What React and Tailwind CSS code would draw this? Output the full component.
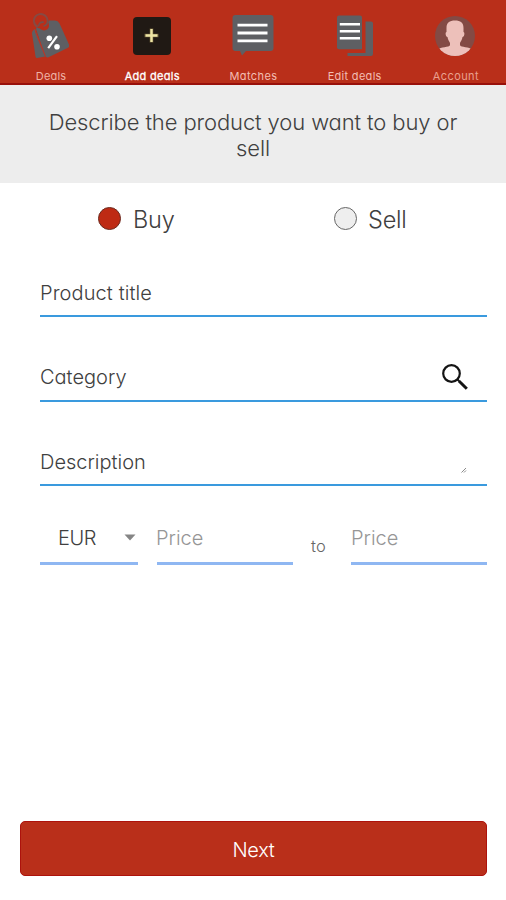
const ink = "text-[#404040]";

function DealsIcon() {
  return (
    <svg width="40" height="48" viewBox="0 0 40 48" fill="none">
      <path d="M1 21.500 Q1 18.500 4 17 L8 28 L14.500 44.500 L6 46 Q4.800 46 4.500 44.500 Z" fill="#5e5f63" />
      <path d="M5 17 L14 43.500 Q15 45.800 17 45.500 L36.500 36 Q38.800 34.800 38 32.500 L28.500 11.500 Q27 8.800 24 8.600 L14 8.500 Q6 11 5 17 Z" fill="#5e5f63" />
      <path d="M4 17.500 Q4.500 21 6.500 25 L14.500 44.500" stroke="#b5382a" strokeWidth="1.100" />
      <circle cx="13" cy="13.500" r="5" fill="#b92f1a" />
      <circle cx="9.800" cy="8.800" r="7.800" fill="#b92f1a" />
      <path d="M7 15 A6.800 6.800 0 1 1 16.500 8" stroke="#874a43" strokeWidth="2" />
      <path d="M16.500 8 Q17 13 12.500 14.200 M7.500 14.500 Q8 9.500 12.800 10.200" stroke="#75504c" strokeWidth="1.600" />
      <path d="M26 24.200 L17.200 36.200" stroke="#fff" strokeWidth="2.200" />
      <circle cx="18.300" cy="26.200" r="2.800" fill="#fff" />
      <circle cx="26" cy="34.800" r="2.800" fill="#fff" />
    </svg>
  );
}

function AddIcon() {
  return (
    <svg width="38" height="48" viewBox="0 0 38 48">
      <rect x="0" y="5" width="38" height="38" rx="4" fill="#201914" />
      <path d="M11.500 23.500 H25.500 M18.500 16.500 V30.500" stroke="#6b5c38" strokeWidth="3.600" />
      <path d="M12.500 23.500 H24.500 M18.500 17 V30" stroke="#eee5a5" strokeWidth="2.400" />
    </svg>
  );
}

function MatchesIcon() {
  return (
    <svg width="42" height="48" viewBox="0 0 42 48">
      <path d="M3.500 3 H38.500 Q41.500 3 41.500 6 V36 Q41.500 39 38.500 39 H14 L10 43.500 L8 39 H3.500 Q.5 39 .5 36 V6 Q.5 3 3.500 3 Z" fill="#5e5f63" />
      <path d="M5.500 13.200 H35.500 M5.500 21 H35.500 M5.500 28.800 H35.500" stroke="#fff" strokeWidth="2.800" />
    </svg>
  );
}

function EditIcon() {
  return (
    <svg width="38" height="48" viewBox="0 0 38 48">
      <path d="M4 3.500 H25 Q27 3.500 27 5.500 V37.200 H4 Q2 37.200 2 35.200 V5.500 Q2 3.500 4 3.500 Z" fill="#5e5f63" />
      <path d="M30.500 9.500 H36 Q38 9.500 38 11.500 V42 Q38 44 36 44 H12.500 V41 H30.500 Z" fill="#5e5f63" />
      <path d="M4.800 12.200 H25 M4.800 19.200 H25 M4.800 26.200 H25" stroke="#fff" strokeWidth="2.500" />
    </svg>
  );
}

function AccountIcon() {
  return (
    <svg width="40" height="48" viewBox="0 0 40 48">
      <defs>
        <clipPath id="avatar">
          <circle cx="20" cy="24" r="20" />
        </clipPath>
      </defs>
      <circle cx="20" cy="24" r="20" fill="#834a44" />
      <path
        clipPath="url(#avatar)"
        d="M20 8.500 C25.500 8.500 28.500 10.500 28.500 16 V20 C30.200 20.500 29.200 25 27.500 25 C27 28 25.800 29.500 25 31 V33 C25.500 36 35 34 37 38 V48 H3 V38 C5 34 14.500 36 15 33 V31 C14.200 29.500 13 28 12.500 25 C10.800 25 9.800 20.500 11.500 20 V16 C11.500 10.500 14.500 8.500 20 8.500 Z"
        fill="#edc0ba"
      />
    </svg>
  );
}

const tabs = [
  { label: "Deals", Icon: DealsIcon, tone: "text-[#efb3a6] tracking-[0.2px]" },
  { label: "Add deals", Icon: AddIcon, tone: "text-white tracking-[0.3px] [-webkit-text-stroke:0.3px_white]" },
  { label: "Matches", Icon: MatchesIcon, tone: "text-[#f3bdb3] tracking-[0.4px]" },
  { label: "Edit deals", Icon: EditIcon, tone: "text-[#f3bdb3] tracking-[0.3px]" },
  { label: "Account", Icon: AccountIcon, tone: "text-[#e9a08f] tracking-[0.4px]" },
];

function Field({ label, spacing, children }) {
  return (
    <div className="flex h-[60px] items-center justify-between border-b-2 border-[#3a9ade] pt-[13px]">
      <span className={`text-[20px] leading-6 ${spacing} ${ink}`}>{label}</span>
      {children}
    </div>
  );
}

export default function App() {
  return (
    <div className="flex h-[900px] w-[506px] flex-col overflow-hidden bg-white font-['Inter',sans-serif] font-light [font-feature-settings:'cv11']">
      <nav className="grid h-[85px] shrink-0 grid-cols-5 border-b-2 border-[#98100b] bg-[#b92f1a] pt-3">
        {tabs.map(({ label, Icon, tone }) => (
          <div key={label} className="flex flex-col items-center">
            <Icon />
            <span className={`mt-[8px] pl-[1px] text-[11px] leading-4 font-normal whitespace-nowrap ${tone}`}>{label}</span>
          </div>
        ))}
      </nav>

      <header className={`h-[98px] shrink-0 bg-[#ededed] px-10 pt-6 text-center text-[22px] leading-[26px] tracking-[-0.11px] ${ink}`}>
        Describe the product you want to buy or sell
      </header>

      <div className={`flex h-[72px] shrink-0 text-[23.5px] leading-7 tracking-[-0.2px] ${ink}`}>
        <label className="flex h-[72px] w-[236px] items-center pb-[2px] pl-[98px]">
          <span className="size-[23px] rounded-full border border-[#6b2b20] bg-[#be2a14]" />
          <span className="ml-[12px] pt-[4px]">Buy</span>
        </label>
        <label className="flex h-[72px] items-center pb-[2px] pl-[98px]">
          <span className="size-[23px] rounded-full border border-[#666] bg-[#eeeeee]" />
          <span className="ml-[11px] pt-[4px]">Sell</span>
        </label>
      </div>

      <main className="ml-10 flex w-[447px] flex-col gap-[24.500px] pt-[2px]">
        <Field label="Product title" spacing="tracking-[0.1px]" />
        <Field label="Category" spacing="tracking-normal">
          <svg className="mr-[18px] -mt-[1px]" width="28" height="28" viewBox="0 0 28 28" fill="none" stroke="#141414">
            <circle cx="10.500" cy="10.500" r="8.300" strokeWidth="2.200" />
            <path d="M16.500 16.500 L19 19" strokeWidth="2" />
            <path d="M18.200 18.200 L25.800 25.800" strokeWidth="3" />
          </svg>
        </Field>
        <Field label="Description" spacing="tracking-normal">
          <svg className="mt-[16px] mr-[20px]" width="6" height="6" viewBox="0 0 6 6" stroke="#8a8a8a">
            <path d="M0.500 5.500 L5 1 M3 5.500 L5 3.500" />
          </svg>
        </Field>
      </main>

      <section className="mt-[18px] ml-10 flex w-[447px] text-[20px] leading-6">
        <div className={`flex h-[61px] w-[98px] items-center justify-between border-b-3 border-[#8fb7f2] pr-[2px] pl-[18px] pt-[9px] ${ink}`}>
          <span className="tracking-[-0.4px]">EUR</span>
          <svg width="12" height="7" viewBox="0 0 12 7" fill="#858585">
            <path d="M0.500 0.500 H11.500 L6 6.500 Z" />
          </svg>
        </div>
        <div className="ml-[19px] flex h-[61px] w-[136px] items-center border-b-3 border-[#8fb7f2] pt-[9px] text-[#969696]">
          <span className="-ml-[1px]">Price</span>
        </div>
        <span className="w-[58px] pt-[30px] pr-[7px] text-center text-[16.500px] tracking-[0.3px] text-[#666]">to</span>
        <div className="flex h-[61px] w-[136px] items-center border-b-3 border-[#8fb7f2] pt-[9px] text-[#969696]">
          <span>Price</span>
        </div>
      </section>

      <button className="mx-5 mt-auto mb-6 h-[55px] w-[467px] shrink-0 rounded-[5px] border border-[#ad120c] bg-[#b92f1a] pt-[2px] text-[20px] tracking-[-0.3px] text-white">
        Next
      </button>
    </div>
  );
}
